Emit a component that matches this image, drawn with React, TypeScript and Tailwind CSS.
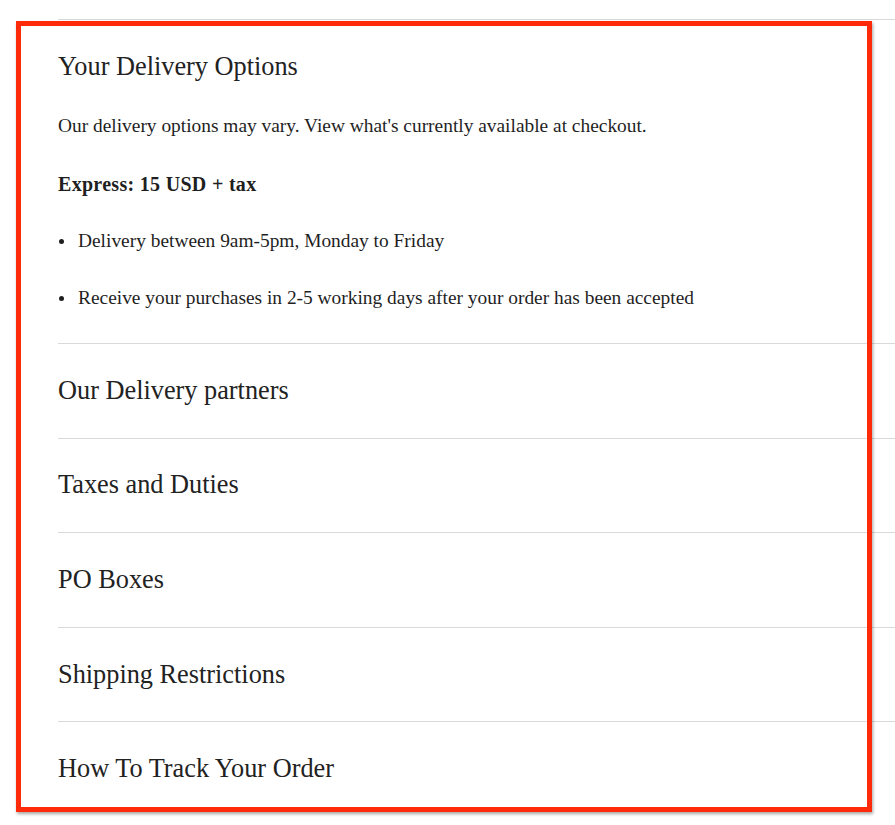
import React from "react";

const serif = { fontFamily: "'Liberation Serif', 'DejaVu Serif', serif" };

const secciones = [
  "Our Delivery partners",
  "Taxes and Duties",
  "PO Boxes",
  "Shipping Restrictions",
  "How To Track Your Order",
];

const App: React.FC = () => {
  return (
    <div className="relative w-[895px] h-[825px] bg-white overflow-hidden text-[#1f1f1f]" style={serif}>
      <div className="pl-[58px] pt-[19px]">
        {/* Opciones de entrega (abierto) */}
        <div className="border-t border-[#d9d9d9] pt-[31px] pb-[33px]">
          <h2 className="text-[26.3px] leading-[32px] text-[#222]">
            Your Delivery Options
          </h2>
          <p className="mt-[31px] text-[19.4px] leading-[24px]">
            Our delivery options may vary. View what's currently available at checkout.
          </p>
          <p className="mt-[34px] text-[20px] leading-[24px] font-bold tracking-[0.3px]">
            Express: 15 USD + tax
          </p>
          <ul className="mt-[33px] flex flex-col gap-[33px] text-[19.4px] leading-[24px]">
            <li className="flex items-center">
              <span className="ml-[1px] mr-[14px] w-[5px] h-[5px] rounded-full bg-[#1f1f1f]" />
              Delivery between 9am-5pm, Monday to Friday
            </li>
            <li className="flex items-center">
              <span className="ml-[1px] mr-[14px] w-[5px] h-[5px] rounded-full bg-[#1f1f1f]" />
              Receive your purchases in 2-5 working days after your order has been accepted
            </li>
          </ul>
        </div>

        {/* Secciones cerradas */}
        {secciones.map((s) => (
          <div
            key={s}
            className="border-t border-[#d9d9d9] h-[94.6px] flex items-center"
          >
            <span className="text-[26.3px] leading-[32px] text-[#222]">{s}</span>
          </div>
        ))}
      </div>

      {/* Marco rojo de anotación */}
      <div className="absolute left-[16px] top-[21px] w-[856px] h-[791px] border-[5px] border-[#ff2a0a] shadow-[1px_2px_3px_rgba(0,0,0,0.35)] pointer-events-none" />
    </div>
  );
};

export default App;
